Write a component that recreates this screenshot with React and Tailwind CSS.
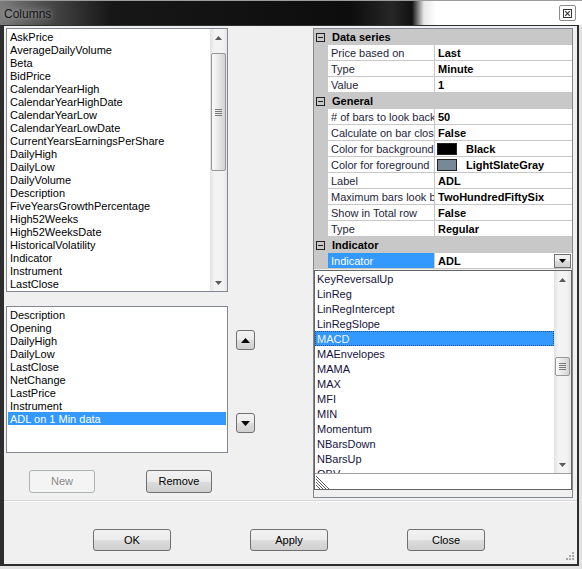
import React from 'react'

const upperItems = [
  'AskPrice', 'AverageDailyVolume', 'Beta', 'BidPrice', 'CalendarYearHigh',
  'CalendarYearHighDate', 'CalendarYearLow', 'CalendarYearLowDate',
  'CurrentYearsEarningsPerShare', 'DailyHigh', 'DailyLow', 'DailyVolume',
  'Description', 'FiveYearsGrowthPercentage', 'High52Weeks', 'High52WeeksDate',
  'HistoricalVolatility', 'Indicator', 'Instrument', 'LastClose',
]

const lowerItems = [
  'Description', 'Opening', 'DailyHigh', 'DailyLow', 'LastClose',
  'NetChange', 'LastPrice', 'Instrument', 'ADL on 1 Min data',
]

const indicatorItems = [
  'KeyReversalUp', 'LinReg', 'LinRegIntercept', 'LinRegSlope', 'MACD',
  'MAEnvelopes', 'MAMA', 'MAX', 'MFI', 'MIN', 'Momentum', 'NBarsDown',
  'NBarsUp', 'OBV',
]

const sections = [
  {
    title: 'Data series',
    rows: [
      { name: 'Price based on', value: 'Last' },
      { name: 'Type', value: 'Minute' },
      { name: 'Value', value: '1' },
    ],
  },
  {
    title: 'General',
    rows: [
      { name: '# of bars to look back', value: '50' },
      { name: 'Calculate on bar close', value: 'False' },
      { name: 'Color for background', value: 'Black', swatch: 'bg-black' },
      { name: 'Color for foreground', value: 'LightSlateGray', swatch: 'bg-[#778899]' },
      { name: 'Label', value: 'ADL' },
      { name: 'Maximum bars look back', value: 'TwoHundredFiftySix' },
      { name: 'Show in Total row', value: 'False' },
      { name: 'Type', value: 'Regular' },
    ],
  },
  {
    title: 'Indicator',
    rows: [{ name: 'Indicator', value: 'ADL', selected: true }],
  },
]

const Tri = ({ down, w = 7, h = 4, color = '#5a5a5a' }) => (
  <svg width={w} height={h} viewBox={`0 0 ${w} ${h}`}>
    <path
      d={down ? `M0 0H${w}L${w / 2} ${h}z` : `M${w / 2} 0L${w} ${h}H0z`}
      fill={color}
    />
  </svg>
)

const Grip = () => (
  <svg width="7" height="7" viewBox="0 0 7 7">
    <path d="M0 0.5H7M0 2.5H7M0 4.5H7M0 6.5H7" stroke="#7a7a7a" strokeWidth="1" />
  </svg>
)

const ScrollBar = ({ spacer, thumb }) => (
  <div className="w-[17px] h-full flex flex-col bg-[linear-gradient(90deg,#e2e2e2,#f3f3f3_25%,#f3f3f3_75%,#e6e6e6)]">
    <div className="h-[17px] flex items-center justify-center">
      <Tri />
    </div>
    <div className={spacer} />
    <div className={`${thumb} mx-[1px] rounded-[2px] border border-[#979797] bg-[linear-gradient(90deg,#fafafa,#e8e8e8_50%,#d2d2d2)] flex items-center justify-center`}>
      <Grip />
    </div>
    <div className="flex-1" />
    <div className="h-[17px] flex items-center justify-center">
      <Tri down />
    </div>
  </div>
)

const Btn = ({ children, className = '', disabled }) => (
  <div
    className={`flex items-center justify-center rounded-[3px] border text-[11px] ${
      disabled
        ? 'border-[#adb2b5] bg-[#f4f4f4] text-[#8a8a8a]'
        : 'border-[#707070] bg-[linear-gradient(180deg,#f2f2f2_0%,#ebebeb_50%,#dddddd_50%,#cfcfcf_100%)] text-black'
    } ${className}`}
  >
    {children}
  </div>
)

const MinusBox = () => (
  <svg width="9" height="9" viewBox="0 0 9 9">
    <rect x="0.5" y="0.5" width="8" height="8" fill="none" stroke="#222" />
    <path d="M2 4.5H7" stroke="#222" />
  </svg>
)

const TitleBar = () => (
  <div className="h-[25px] flex items-center border-t border-[#9c9c9c] bg-[linear-gradient(90deg,#7c7c7c_0px,#4c4c4c_45px,#171717_110px,#0d0d0d_350px,#262626_392px,#121212_412px,#e8e8e8_424px,#ffffff_436px)]">
    <span className="pl-[4px] pt-[1px] text-[12px] text-[#141414] [text-shadow:0_0_6px_#cfcfcf]">Columns</span>
    <div className="ml-auto mr-[6px] w-[17px] h-[16px] border border-[#8c8c8c] bg-white rounded-[2px] flex items-center justify-center">
      <svg width="9" height="9" viewBox="0 0 9 9">
        <rect x="0.5" y="0.5" width="8" height="8" fill="none" stroke="#333" />
        <path d="M2.2 2.2L6.8 6.8M6.8 2.2L2.2 6.8" stroke="#333" strokeWidth="1.2" />
      </svg>
    </div>
  </div>
)

const PropertyGrid = () => (
  <div className="relative w-[260px] h-[470px] border border-[#828790] bg-[#f0f0f0] text-[11px]">
    {sections.map((s) => (
      <div key={s.title}>
        <div className="flex items-center h-[16px] bg-[#c8c8c8] pl-[2px]">
          <MinusBox />
          <span className="ml-[7px] font-bold text-black leading-[17px]">{s.title}</span>
        </div>
        {s.rows.map((r) => (
          <div key={r.name} className="flex h-[16px]">
            <div className="w-[14px] bg-[#c8c8c8]" />
            <div
              className={`w-[107px] border-r border-b border-[#c8c8c8] pl-[3px] overflow-hidden whitespace-nowrap leading-[16px] ${
                r.selected ? 'bg-[#3399ff] text-white' : 'bg-white text-[#1e1e3a]'
              }`}
            >
              {r.name}
            </div>
            <div className="flex-1 flex items-center border-b border-[#c8c8c8] bg-white pl-[2px] font-bold text-black whitespace-nowrap">
              {r.swatch && (
                <div className={`w-[20px] h-[12px] border border-[#222] mr-[8px] ${r.swatch}`} />
              )}
              <span className="pl-[1px] pt-[1px]">{r.value}</span>
              {r.selected && (
                <div className="ml-auto mr-[1px] w-[17px] h-[14px] border border-[#707070] bg-[linear-gradient(180deg,#f2f2f2,#ebebeb_50%,#dcdcdc_50%,#cfcfcf)] flex items-center justify-center">
                  <Tri down color="#000" />
                </div>
              )}
            </div>
          </div>
        ))}
      </div>
    ))}

    {/* indicator dropdown */}
    <div className="absolute top-[241px] left-0 right-0 h-[220px] border border-[#646464] bg-white flex flex-col">
      <div className="flex h-[202px]">
        <div className="flex-1 overflow-hidden">
          {indicatorItems.map((it) =>
            it === 'MACD' ? (
              <div key={it} className="h-[15px] leading-[14px] pl-[1px] bg-[#3399ff] text-[#f2f2ff] border border-dotted border-[#1d4f8a]">
                {it}
              </div>
            ) : (
              <div key={it} className="h-[15px] leading-[16px] pl-[2px] text-[#14143c] whitespace-nowrap">
                {it}
              </div>
            )
          )}
        </div>
        <ScrollBar spacer="h-[69px]" thumb="h-[19px]" />
      </div>
      <div className="h-[16px] border-t border-[#a0a0a0] flex items-end">
        <svg width="16" height="15" viewBox="0 0 16 15">
          <path d="M1 2L14 15M1 5L11 15M1 8L8 15M1 11L5 15" stroke="#5a5a5a" strokeWidth="1" />
          <path d="M1 3L13 15M1 6L10 15M1 9L7 15M1 12L4 15" stroke="#ffffff" strokeWidth="1" />
        </svg>
      </div>
    </div>
  </div>
)

export default function App() {
  return (
    <div className="w-[582px] h-[569px] flex flex-col bg-[#e2e2e2] overflow-hidden font-['Liberation_Sans',Arial,sans-serif]">
      <TitleBar />
      <div className="flex h-[541px]">
        <div className="w-[579px] h-full flex flex-col border-l-4 border-r-2 border-t border-b-2 border-[#2e2e2e] bg-[#f0f0f0]">
          <div className="relative flex-1 flex flex-col">
            <div className="flex h-[474px] pt-[2px]">
              {/* left column */}
              <div className="w-[224px] pl-[2px] flex flex-col">
                <div className="w-[222px] h-[264px] border border-[#828790] bg-white flex">
                  <div className="flex-1 pt-[1px] overflow-hidden text-[11px] text-black">
                    {upperItems.map((it) => (
                      <div key={it} className="h-[13px] leading-[14px] pl-[3px] whitespace-nowrap">{it}</div>
                    ))}
                  </div>
                  <ScrollBar spacer="h-[7px]" thumb="h-[118px]" />
                </div>
                <div className="mt-[14px] w-[222px] h-[147px] border border-[#828790] bg-white pt-[1px] text-[11px] text-black">
                  {lowerItems.map((it) =>
                    it === 'ADL on 1 Min data' ? (
                      <div key={it} className="mx-[1px] h-[13px] leading-[14px] pl-[2px] bg-[#3399ff] text-white">{it}</div>
                    ) : (
                      <div key={it} className="h-[13px] leading-[14px] pl-[3px]">{it}</div>
                    )
                  )}
                </div>
                <div className="mt-[17px] flex pl-[23px] gap-[51px]">
                  <Btn disabled className="w-[66px] h-[23px]">New</Btn>
                  <Btn className="w-[66px] h-[23px]">Remove</Btn>
                </div>
              </div>

              {/* move buttons */}
              <div className="w-[85px] pl-[8px] flex flex-col">
                <Btn className="mt-[302px] w-[19px] h-[20px]">
                  <Tri w={9} h={5} color="#000" />
                </Btn>
                <Btn className="mt-[63px] w-[19px] h-[20px]">
                  <Tri down w={9} h={5} color="#000" />
                </Btn>
              </div>

              <PropertyGrid />
            </div>

            <div className="h-[2px] border-t border-[#d5d5d5] bg-white" />

            <div className="mt-[27px] flex pl-[89px] gap-[79px]">
              <Btn className="w-[78px] h-[22px]">OK</Btn>
              <Btn className="w-[78px] h-[22px]">Apply</Btn>
              <Btn className="w-[78px] h-[22px]">Close</Btn>
            </div>

            <svg className="absolute right-[3px] bottom-[2px]" width="10" height="10" viewBox="0 0 10 10">
              <g fill="#a8a8a8">
                <rect x="8" y="0" width="2" height="2" />
                <rect x="5" y="3" width="2" height="2" />
                <rect x="8" y="3" width="2" height="2" />
                <rect x="2" y="6" width="2" height="2" />
                <rect x="5" y="6" width="2" height="2" />
                <rect x="8" y="6" width="2" height="2" />
              </g>
            </svg>
          </div>
        </div>
      </div>
    </div>
  )
}
